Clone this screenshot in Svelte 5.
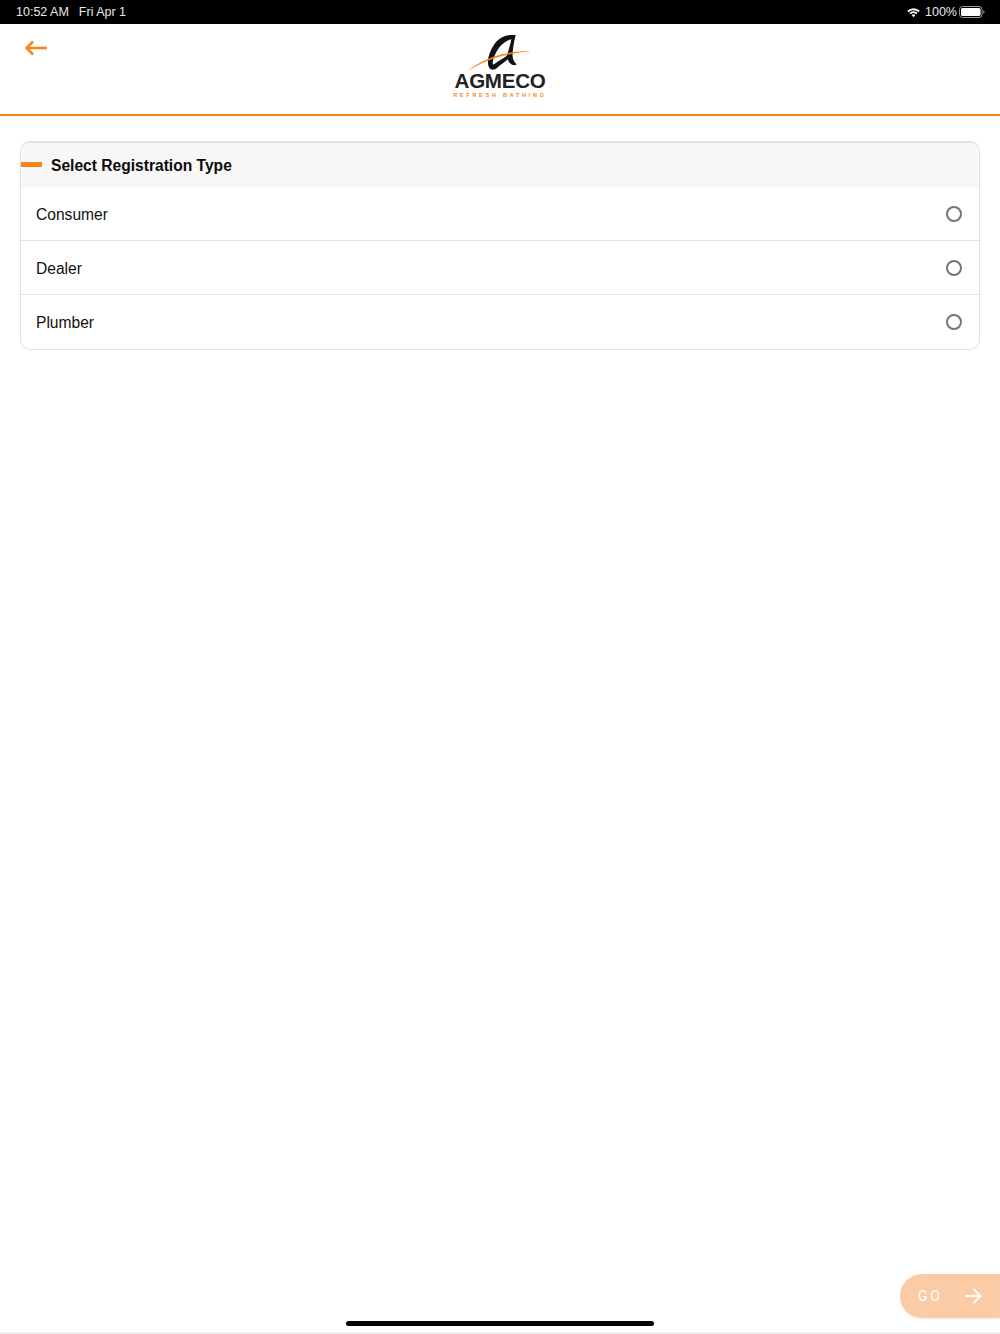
<script>
  const rows = ['Consumer', 'Dealer', 'Plumber'];
</script>

<div class="page">
  <div class="status">
    <div class="status-left"><span>10:52 AM</span><span>Fri Apr 1</span></div>
    <div class="status-right">
      <svg class="wifi" width="13" height="11" viewBox="0 0 14 11">
        <path d="M0.2 3.7A9.6 9.6 0 0 1 13.8 3.7L12.3 5.2A7.6 7.6 0 0 0 1.7 5.2Z" fill="#fff"/>
        <path d="M2.6 6A6.3 6.3 0 0 1 11.4 6L10 7.5A4.4 4.4 0 0 0 4 7.5Z" fill="#fff"/>
        <path d="M4.9 8.3A3 3 0 0 1 9.1 8.3L7 10.6Z" fill="#fff"/>
      </svg>
      <span class="pct">100%</span>
      <svg class="battery" width="26" height="12" viewBox="0 0 26 12">
        <rect x="0.5" y="0.5" width="22.5" height="11" rx="3" fill="none" stroke="#9a9a9a"/>
        <rect x="2" y="2" width="19.5" height="8" rx="1.6" fill="#fff"/>
        <path d="M24.2 4.2C25.2 4.6 25.6 5.2 25.6 6S25.2 7.4 24.2 7.8Z" fill="#8a8a8a"/>
      </svg>
    </div>
  </div>

  <header class="topbar">
    <svg class="back" width="24" height="16" viewBox="0 0 24 16">
      <path d="M23 8H2.5M9 1.5L2.5 8l6.5 6.5" fill="none" stroke="#f7841f" stroke-width="2.5"/>
    </svg>
    <div class="logo">
      <svg class="mark" width="64" height="37" viewBox="0 0 64 37">
        <path fill-rule="evenodd" fill="#111" d="M22.7 34.3C20.5 33 19.6 29 20 25.3C21 18 24.5 11 28.7 6.3C32 3 36 1 40.3 0.3C43 -0.1 45.5 0 47.7 0C46.8 3.5 46 7 45.5 10.3C45 13.8 44.6 17 44.5 20.3C44.7 24 46 27.5 48.7 29.3C47.5 30.1 46.4 30.3 45.2 30C42.6 29.2 40.6 27.3 39.7 24.3C37.4 26.5 35 28.3 32.7 29.7C30.5 31.4 29 33.2 27 34.3C25.6 34.9 24 35 22.7 34.3ZM24.7 28.7C25 29.6 25.6 29.8 26 29.3C27.5 28.5 29 27.3 30.3 26.3C33 24.7 36 23 38.6 21C39.6 18.7 40.4 16.2 41 13.7C41.9 10.5 42.7 7.5 43.4 4.3C39.8 5 36.5 7 33.7 9.7C30.8 12.7 28.5 16.2 27 19.7C25.6 22.7 24.7 25.7 24.7 28.7Z"/>
        <path d="M0 35.8C7 30 16 25 26 21.5C38 17.6 51 16 63.5 16C51 17.4 38 19.5 27 23C17 26.3 8 31 0 35.8Z" fill="#f7841f"/>
      </svg>
      <div class="wordmark">AGMECO</div>
      <div class="tagline">REFRESH BATHING</div>
    </div>
  </header>

  <main class="content">
    <section class="card">
      <div class="card-head">
        <span class="dash"></span>
        <h2>Select Registration Type</h2>
      </div>
      {#each rows as row}
        <div class="row">
          <span class="label">{row}</span>
          <span class="radio"></span>
        </div>
      {/each}
    </section>
  </main>

  <div class="home"><span></span></div>

  <button class="go">
    <span>GO</span>
    <svg width="18" height="16" viewBox="0 0 18 16">
      <path d="M1 8H16.5M9.5 1l7 7-7 7" fill="none" stroke="#fff" stroke-width="1.8"/>
    </svg>
  </button>
</div>

<style>
  :global(body) {
    margin: 0;
    background: #fff;
  }
  .page {
    position: relative;
    width: 1000px;
    height: 1334px;
    display: flex;
    flex-direction: column;
    overflow: hidden;
    font-family: "Liberation Sans", Arial, sans-serif;
    color: #111;
  }
  .status {
    height: 24px;
    flex: none;
    box-sizing: border-box;
    padding: 0 15px 0 16px;
    background: #000;
    color: #e8e8e8;
    font-size: 12.5px;
    display: flex;
    align-items: center;
    justify-content: space-between;
  }
  .status-left {
    display: flex;
    gap: 10px;
  }
  .status-right {
    display: flex;
    align-items: center;
    gap: 2px;
  }
  .pct {
    margin-left: 3px;
  }
  .topbar {
    flex: none;
    height: 92px;
    box-sizing: border-box;
    border-bottom: 2px solid #f7841f;
    display: flex;
    justify-content: center;
    position: relative;
  }
  .back {
    position: absolute;
    left: 24px;
    top: 16px;
  }
  .logo {
    width: 100px;
    padding-top: 11px;
    display: flex;
    flex-direction: column;
    align-items: center;
  }
  .mark {
    display: block;
    margin-bottom: -2px;
  }
  .wordmark {
    font-size: 20.6px;
    line-height: 22px;
    font-weight: 700;
    color: #222;
    letter-spacing: -0.3px;
  }
  .tagline {
    margin-top: -1px;
    font-size: 5.5px;
    line-height: 8px;
    font-weight: 700;
    letter-spacing: 2.75px;
    color: #f7841f;
    white-space: nowrap;
  }
  .content {
    flex: 1;
    padding: 25px 20px 0;
  }
  .card {
    border: 1px solid #e2e2e2;
    border-top-width: 2px;
    border-radius: 10px;
    overflow: hidden;
  }
  .card-head {
    height: 44px;
    background: #f7f7f7;
    display: flex;
    align-items: center;
    gap: 9px;
  }
  .dash {
    width: 21px;
    height: 5px;
    margin-top: -1px;
    background: #f7841f;
  }
  h2 {
    margin: 0;
    padding-top: 2px;
    font-size: 15.6px;
    font-weight: 700;
    color: #0c0c0c;
  }
  .row {
    height: 53px;
    padding: 0 17px 0 15px;
    display: flex;
    align-items: center;
    justify-content: space-between;
    font-size: 15.6px;
    border-bottom: 1px solid #e2e2e2;
  }
  .row:last-child {
    border-bottom: 0;
    padding-bottom: 1px;
  }
  .label {
    padding-top: 3px;
  }
  .radio {
    width: 12px;
    height: 12px;
    border: 2px solid #757575;
    border-radius: 50%;
  }
  .home {
    flex: none;
    height: 13px;
    border-bottom: 2px solid #eee;
    display: flex;
    justify-content: center;
  }
  .home span {
    width: 308px;
    height: 5px;
    margin-top: 2px;
    border-radius: 3px;
    background: #000;
  }
  .go {
    position: absolute;
    right: 0;
    bottom: 16px;
    width: 100px;
    height: 44px;
    box-sizing: border-box;
    padding: 0 18px;
    border: 0;
    border-radius: 22px 0 0 22px;
    background: #fbcba6;
    box-shadow: 0 1px 2px rgba(0, 0, 0, 0.08);
    color: #fff;
    font-family: Roboto, sans-serif;
    font-size: 14px;
    letter-spacing: 2.6px;
    display: flex;
    align-items: center;
    justify-content: space-between;
  }
</style>
